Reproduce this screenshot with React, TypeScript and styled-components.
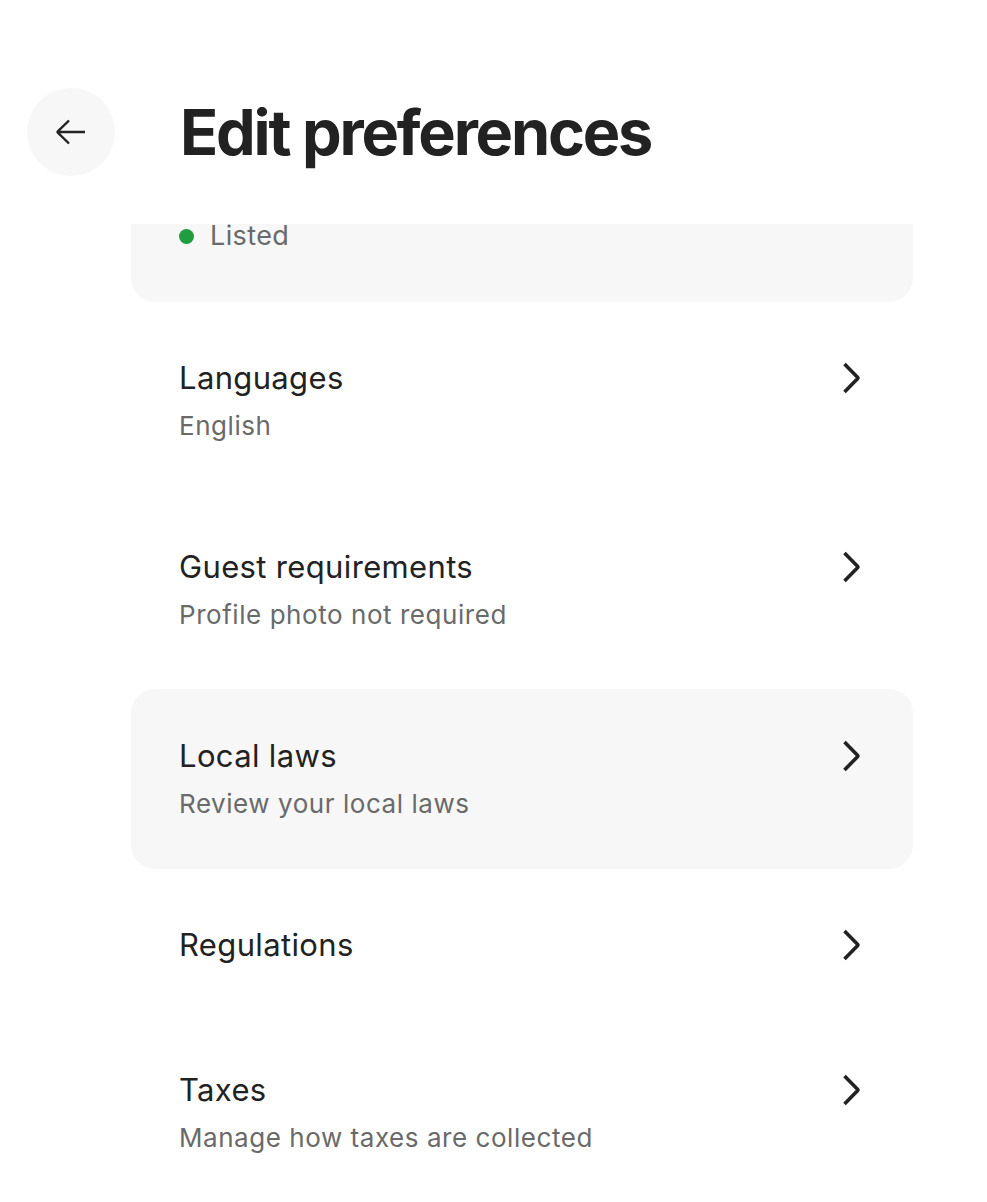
import React from "react";
import styled, { createGlobalStyle } from "styled-components";

const GlobalStyle = createGlobalStyle`
  html, body {
    margin: 0;
    padding: 0;
    background: #ffffff;
  }
  body {
    font-family: Inter, "Noto Sans", "Liberation Sans", sans-serif;
    color: #222222;
    -webkit-font-smoothing: antialiased;
  }
`;

const Page = styled.div`
  width: 987px;
  height: 1202px;
  overflow: hidden;
  background: #ffffff;
  display: flex;
  flex-direction: column;
`;

const Header = styled.header`
  height: 224px;
  box-sizing: border-box;
  padding: 88px 0 0 27px;
  display: flex;
  align-items: flex-start;
  gap: 65px;
  background: #ffffff;
  flex-shrink: 0;
`;

const BackButton = styled.button`
  width: 88px;
  height: 88px;
  border-radius: 50%;
  border: none;
  background: #f7f7f7;
  display: flex;
  align-items: center;
  justify-content: center;
  padding: 0;
  cursor: pointer;
  color: #222222;
  flex-shrink: 0;
`;

const Title = styled.h1`
  margin: 0;
  height: 88px;
  display: flex;
  align-items: center;
  font-size: 63px;
  font-weight: 700;
  letter-spacing: -2.2px;
  color: #222222;
`;

const List = styled.div`
  margin-left: 131px;
  width: 782px;
  display: flex;
  flex-direction: column;
  gap: 9px;
`;

const StatusCard = styled.div`
  background: #f7f7f7;
  border-radius: 0 0 24px 24px;
  padding: 0 48px 54px;
  display: flex;
  align-items: center;
  gap: 16px;
  height: 78px;
  box-sizing: border-box;
`;

const Dot = styled.span`
  width: 15px;
  height: 15px;
  border-radius: 50%;
  background: #1f9d3f;
  flex-shrink: 0;
`;

const StatusText = styled.span`
  font-size: 27px;
  line-height: 24px;
  letter-spacing: 0.4px;
  color: #6a6a6a;
`;

const Row = styled.a<{ $highlight?: boolean }>`
  display: flex;
  align-items: flex-start;
  justify-content: space-between;
  padding: 49px 48px 51px;
  border-radius: 24px;
  background: ${(p) => (p.$highlight ? "#f7f7f7" : "transparent")};
  text-decoration: none;
  color: inherit;
  cursor: pointer;
`;

const RowText = styled.div`
  display: flex;
  flex-direction: column;
  gap: 15px;
`;

const RowTitle = styled.span`
  font-size: 31px;
  line-height: 36px;
  font-weight: 400;
  letter-spacing: 0.35px;
  color: #222222;
`;

const RowSubtitle = styled.span`
  font-size: 26px;
  line-height: 29px;
  font-weight: 400;
  letter-spacing: 0.55px;
  color: #6a6a6a;
`;

const ChevronBox = styled.span`
  width: 36px;
  height: 36px;
  display: flex;
  align-items: center;
  justify-content: center;
  margin-right: -4px;
  color: #222222;
`;

const ArrowLeft = () => (
  <svg width="32" height="32" viewBox="0 0 32 32" fill="none" aria-hidden="true">
    <path
      d="M30 16H3M14 4.5 2.8 15.3a1 1 0 0 0 0 1.4L14 27.5"
      stroke="currentColor"
      strokeWidth="2.4"
      strokeLinecap="butt"
      strokeLinejoin="miter"
    />
  </svg>
);

const ChevronRight = () => (
  <svg width="36" height="36" viewBox="0 0 36 36" fill="none" aria-hidden="true">
    <path
      d="M11.5 4 24.5 17.3a1 1 0 0 1 0 1.4L11.5 32"
      stroke="currentColor"
      strokeWidth="3.6"
      strokeLinecap="butt"
      strokeLinejoin="miter"
    />
  </svg>
);

type Item = { title: string; subtitle?: string; highlight?: boolean };

const items: Item[] = [
  { title: "Languages", subtitle: "English" },
  { title: "Guest requirements", subtitle: "Profile photo not required" },
  { title: "Local laws", subtitle: "Review your local laws", highlight: true },
  { title: "Regulations" },
  { title: "Taxes", subtitle: "Manage how taxes are collected" },
];

export default function App() {
  return (
    <>
      <GlobalStyle />
      <Page>
        <Header>
          <BackButton aria-label="Back">
            <ArrowLeft />
          </BackButton>
          <Title>Edit preferences</Title>
        </Header>
        <List>
          <StatusCard>
            <Dot />
            <StatusText>Listed</StatusText>
          </StatusCard>
          {items.map((item) => (
            <Row key={item.title} $highlight={item.highlight}>
              <RowText>
                <RowTitle>{item.title}</RowTitle>
                {item.subtitle && <RowSubtitle>{item.subtitle}</RowSubtitle>}
              </RowText>
              <ChevronBox>
                <ChevronRight />
              </ChevronBox>
            </Row>
          ))}
        </List>
      </Page>
    </>
  );
}
